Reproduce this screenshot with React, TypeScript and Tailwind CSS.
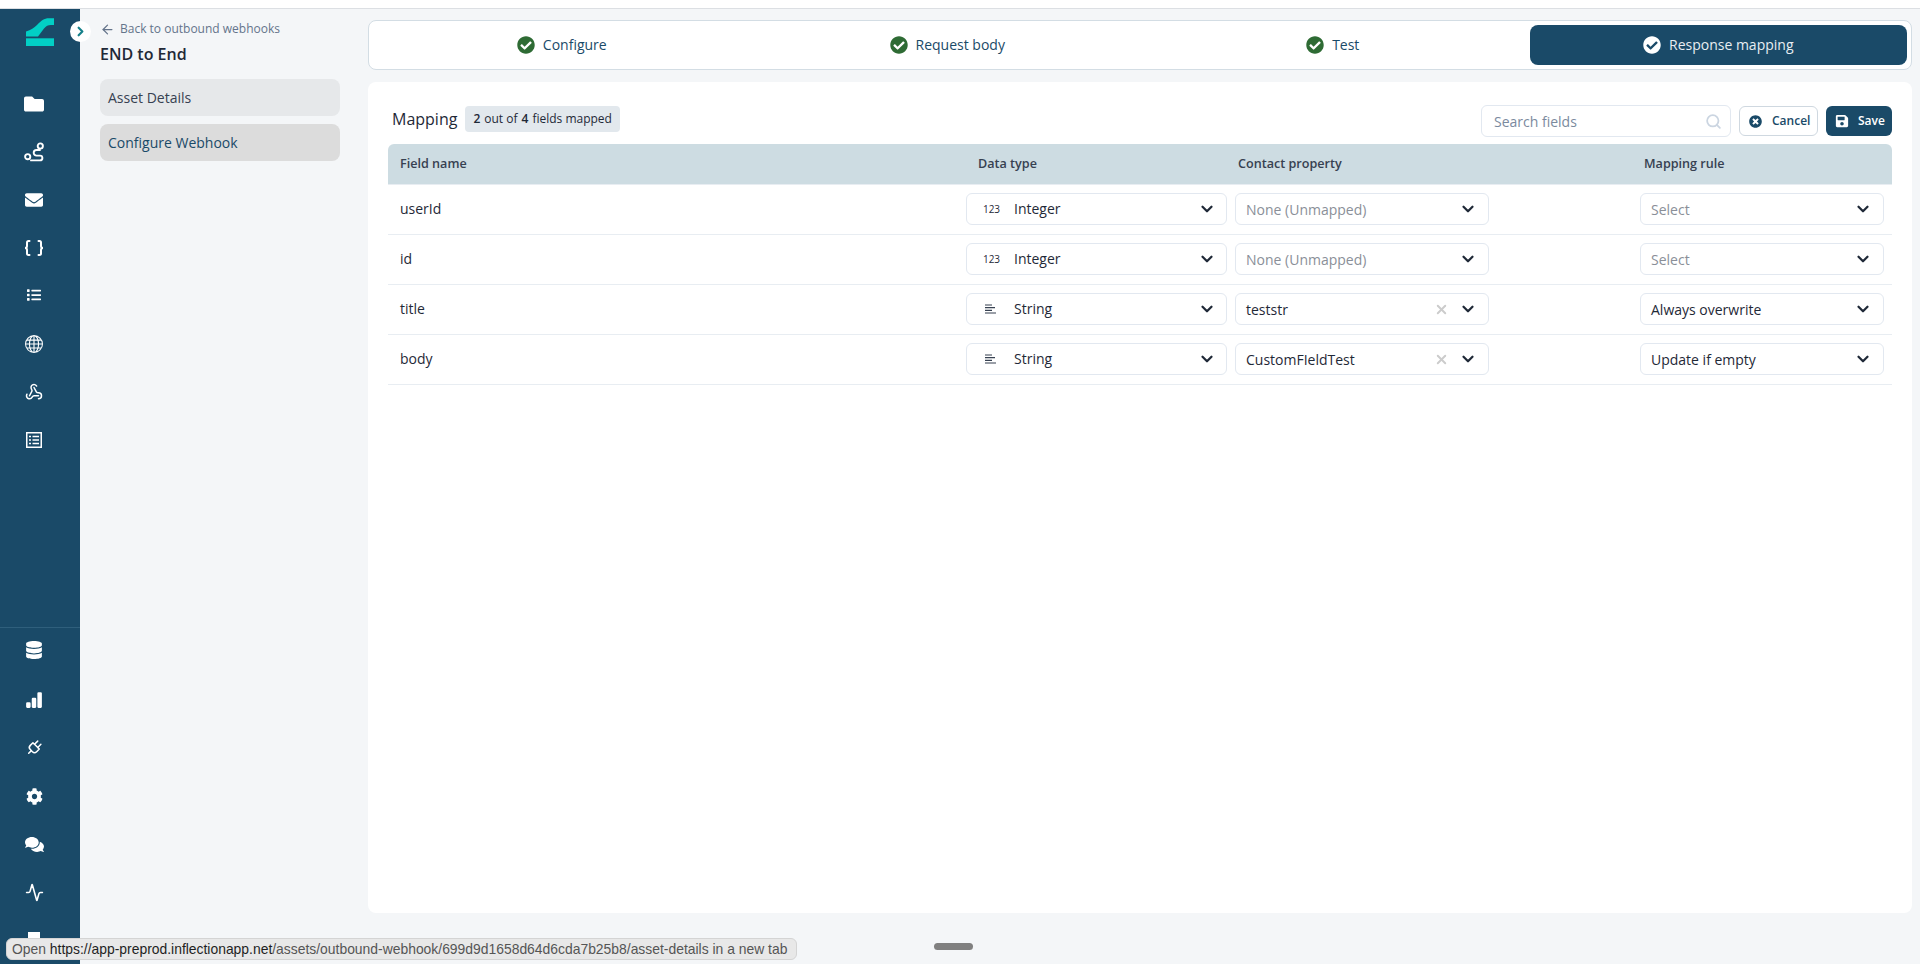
import React from 'react';
import { ArrowLeft, ChevronDown, ChevronRight, Search, Webhook, X } from 'lucide-react';
import {
  FaCheckCircle,
  FaCog,
  FaComments,
  FaDatabase,
  FaEnvelope,
  FaFolder,
  FaList,
  FaSave,
  FaTimesCircle,
} from 'react-icons/fa';
import { BsBarChartFill, BsGlobe } from 'react-icons/bs';
import { LuActivity, LuPlug } from 'react-icons/lu';

const RouteIcon = () => (
  <svg width="20" height="20" viewBox="0 0 20 20" fill="none" stroke="white" strokeWidth="1.9">
    <circle cx="16.3" cy="4" r="2.6" />
    <circle cx="3.7" cy="14.7" r="2.6" />
    <path d="M16 8H12.5a2.8 2.8 0 0 0 0 5.6H16a2.4 2.4 0 0 1 0 4.8H7" strokeLinecap="round" />
  </svg>
);

const BracesIcon = () => (
  <svg width="20" height="16" viewBox="0 0 20 16" fill="none" stroke="white" strokeWidth="2" strokeLinecap="round">
    <path d="M5.5 1H4.5Q3 1 3 2.5V6Q3 8 1 8Q3 8 3 10V13.5Q3 15 4.5 15H5.5" />
    <path d="M14.5 1H15.5Q17 1 17 2.5V6Q17 8 19 8Q17 8 17 10V13.5Q17 15 15.5 15H14.5" />
  </svg>
);

const TableIcon = () => (
  <svg width="16" height="16" viewBox="0 0 16 16" fill="none" stroke="white">
    <rect x="0.75" y="0.75" width="14.5" height="14.5" strokeWidth="1.5" />
    <path d="M6.5 4.5H13M6.5 8H13M6.5 11.5H13M3 4.5H5M3 8H5M3 11.5H5" strokeWidth="1.5" />
  </svg>
);

const LogoIcon = () => (
  <svg width="28" height="28" viewBox="0 0 28 28" fill="#02cfc5">
    <path d="M0 18.5V13.5C5 12 8 10 11 7C15 3 18 0.3 23 0.3H28V7H25C22 7 20 8 18 10.5L12 18.5Z" />
    <rect x="0" y="20.3" width="28" height="7.7" />
  </svg>
);

const TextTypeIcon = () => (
  <svg width="11" height="10" viewBox="0 0 11 10" stroke="#374151" strokeWidth="1.2" className="-ml-[3px]">
    <path d="M0 1H7M0 3.7H10M0 6.3H7M0 9H11" />
  </svg>
);

const navTop = [
  <FaFolder size={20} color="white" />,
  <RouteIcon />,
  <FaEnvelope size={18} color="white" />,
  <BracesIcon />,
  <FaList size={14} color="white" className="-translate-y-px" />,
  <BsGlobe size={18} color="white" />,
  <Webhook size={18} color="white" />,
  <TableIcon />,
];

const navBottom = [
  <FaDatabase size={18} color="white" className="-translate-y-0.5" />,
  <BsBarChartFill size={18} color="white" />,
  <LuPlug size={18} color="white" className="rotate-45" />,
  <FaCog size={17} color="white" />,
  <FaComments size={19} color="white" />,
  <LuActivity size={19} color="white" />,
  <div className="h-4 w-3 bg-white" />,
];

const steps = ['Configure', 'Request body', 'Test', 'Response mapping'];

const rows = [
  { name: 'userId', type: 'Integer', contact: '', rule: '' },
  { name: 'id', type: 'Integer', contact: '', rule: '' },
  { name: 'title', type: 'String', contact: 'teststr', rule: 'Always overwrite' },
  { name: 'body', type: 'String', contact: 'CustomFIeldTest', rule: 'Update if empty' },
];

const Chevron = () => <ChevronDown size={18} strokeWidth={3} className="text-[#1f2937]" />;

const Select = ({ children, className }: { children: React.ReactNode; className: string }) => (
  <div className={`flex h-8 items-center rounded-md border border-[#e2e8f0] bg-white text-sm ${className}`}>
    {children}
  </div>
);

export default function App() {
  return (
    <div className="relative h-[964px] w-[1920px] overflow-hidden bg-[#f4f6f8] font-['Open_Sans',sans-serif] text-[#1f2937]">
      <div className="h-[9px] border-b border-[#dcdfe3] bg-white" />

      <div className="flex h-[955px]">
        <aside className="flex w-20 shrink-0 flex-col bg-[#1a4a68]">
          <div className="mb-[34px] ml-[26px] mt-[9px] h-7">
            <LogoIcon />
          </div>
          {navTop.map((icon, i) => (
            <div key={i} className="flex h-12 w-[68px] shrink-0 items-center justify-center">
              {icon}
            </div>
          ))}
          <div className="mt-auto border-t border-[#2f5f7c]">
            {navBottom.map((icon, i) => (
              <div key={i} className="flex h-12 w-[68px] items-center justify-center">
                {icon}
              </div>
            ))}
          </div>
        </aside>

        <nav className="ml-5 w-60 shrink-0">
          <div className="mt-3 flex h-4 items-center gap-[5px] text-xs text-[#64748b]">
            <ArrowLeft size={15} />
            <span>Back to outbound webhooks</span>
          </div>
          <h1 className="mt-[5px] text-base font-semibold leading-6 text-[#1f2937]">END to End</h1>
          <div className="mt-[13px] flex h-[37px] items-center rounded-lg bg-[#e6e8ea] px-2 text-sm text-[#374151]">
            Asset Details
          </div>
          <div className="mt-2 flex h-[37px] items-center rounded-lg bg-[#dcdcdc] px-2 text-sm text-[#1a4a68]">
            Configure Webhook
          </div>
        </nav>

        <main className="ml-[28px] w-[1544px] shrink-0">
          <div className="mt-[11px] grid h-[50px] grid-cols-4 rounded-lg border border-[#d3dde4] bg-white">
            {steps.map((step, i) => {
              const active = i === steps.length - 1;
              return (
                <div
                  key={step}
                  className={`m-1 flex items-center justify-center gap-2 rounded-lg text-sm ${
                    active ? 'bg-[#1a4a68] text-[#e8eef2]' : 'text-[#1a4a68]'
                  }`}
                >
                  <FaCheckCircle size={18} color={active ? 'white' : '#2e6b34'} />
                  <span>{step}</span>
                </div>
              );
            })}
          </div>

          <section className="mt-3 h-[831px] rounded-lg bg-white px-5 pt-[23px]">
            <div className="flex h-[32px] items-center">
              <div className="-mt-1 flex items-center">
                <span className="ml-1 text-base font-medium">Mapping</span>
                <span className="ml-2 flex h-[26px] items-center gap-1 rounded bg-[#e2e8ed] px-2 text-xs">
                  <b className="font-semibold">2</b> out of <b className="font-semibold">4</b> fields mapped
                </span>
              </div>
              <div className="ml-auto flex h-8 w-[250px] items-center justify-between rounded-md border border-[#e2e8f0] pl-3 pr-2 text-sm text-[#7b8a9e]">
                <span className="pt-px">Search fields</span>
                <Search size={17} className="text-[#cbd5e1]" strokeWidth={2.5} />
              </div>
              <button className="ml-2 flex h-[30px] w-[79px] items-center gap-[10px] rounded-md border border-[#cfd8e0] pl-[9px] text-xs font-semibold text-[#1a4a68]">
                <FaTimesCircle size={13} />
                Cancel
              </button>
              <button className="ml-2 flex h-[30px] w-[66px] items-center gap-[9px] rounded-md bg-[#1a4a68] pl-[9px] text-xs font-semibold text-white">
                <FaSave size={14} />
                Save
              </button>
            </div>

            <div className="mt-[7px] grid h-[41px] grid-cols-[578px_269px_405px_252px] items-center rounded-t-md border-b border-[#e8edf2] bg-[#cddce2] text-[12.6px] font-semibold text-[#374151]">
              <span className="pl-3">Field name</span>
              <span className="pl-3">Data type</span>
              <span className="pl-[3px]">Contact property</span>
              <span className="pl-1">Mapping rule</span>
            </div>

            {rows.map((row) => (
              <div
                key={row.name}
                className="grid h-[50px] grid-cols-[578px_269px_405px_252px] items-center border-b border-[#e8edf2] pb-px"
              >
                <span className="pl-3 text-sm">{row.name}</span>
                <div className="pr-2">
                  <Select className="pr-[10px]">
                    <span className="flex w-[47px] justify-center pl-[2px] text-[10px]">
                      {row.type === 'Integer' ? '123' : <TextTypeIcon />}
                    </span>
                    <span>{row.type}</span>
                    <span className="ml-auto">
                      <Chevron />
                    </span>
                  </Select>
                </div>
                <Select className="w-[254px] pl-[10px] pr-[11px]">
                  <span className={`pt-px ${row.contact ? '' : 'text-[#8a8f98]'}`}>
                    {row.contact || 'None (Unmapped)'}
                  </span>
                  <span className="ml-auto flex items-center gap-[10px]">
                    {row.contact && <X size={15} strokeWidth={3} className="text-[#cccccc]" />}
                    <Chevron />
                  </span>
                </Select>
                <div className="pr-2">
                  <Select className="pl-[10px] pr-[11px]">
                    <span className={`pt-px ${row.rule ? '' : 'text-[#8a8f98]'}`}>{row.rule || 'Select'}</span>
                    <span className="ml-auto">
                      <Chevron />
                    </span>
                  </Select>
                </div>
              </div>
            ))}
          </section>
        </main>
      </div>

      {/* collapse toggle sits over the sidebar edge */}
      <div className="absolute left-[70px] top-[21px] flex h-[21px] w-[21px] items-center justify-center rounded-full bg-white">
        <ChevronRight size={15} strokeWidth={3.5} className="text-[#16808a]" />
      </div>

      {/* window drag handle */}
      <div className="absolute left-[934px] top-[943px] h-[7px] w-[39px] rounded-full bg-[#808080]" />

      {/* browser link hint */}
      <div className="absolute left-[6px] top-[938px] flex h-[22px] w-[791px] items-center rounded-md border border-[#d4d4d4] bg-[#e8e8e8] pl-[5px] font-['Liberation_Sans',sans-serif] text-[13.9px] text-[#555555]">
        Open&nbsp;<span className="text-[#1f1f1f]">https://app-preprod.inflectionapp.net</span>
        /assets/outbound-webhook/699d9d1658d64d6cda7b25b8/asset-details in a new tab
      </div>
    </div>
  );
}
